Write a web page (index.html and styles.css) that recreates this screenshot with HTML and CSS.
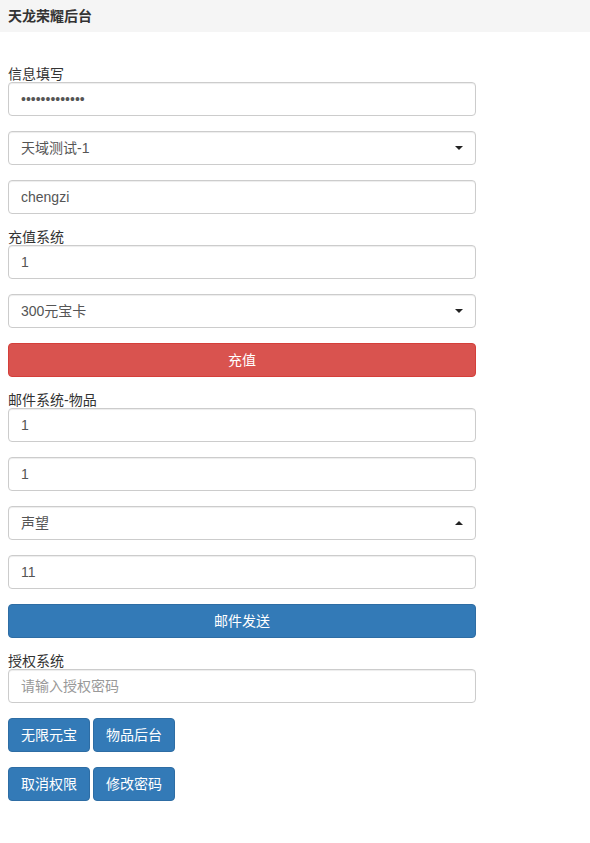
FILE: index.html
```html
<!DOCTYPE html>
<html lang="zh-CN">
<head>
<meta charset="utf-8">
<title>天龙荣耀后台</title>
<link rel="stylesheet" href="styles.css">
</head>
<body>
<header class="topbar">
  <h1 class="brand">天龙荣耀后台</h1>
</header>
<main class="panel">
  <section class="section">
    <label class="section-label">信息填写</label>
    <div class="form-group"><input class="form-control" type="password" value="1234567890123"></div>
    <div class="form-group select-wrap">
      <select class="form-control"><option>天域测试-1</option></select>
    </div>
    <div class="form-group"><input class="form-control" type="text" value="chengzi"></div>
  </section>

  <section class="section">
    <label class="section-label">充值系统</label>
    <div class="form-group"><input class="form-control" type="text" value="1"></div>
    <div class="form-group select-wrap">
      <select class="form-control"><option>300元宝卡</option></select>
    </div>
    <div class="form-group"><button class="btn btn-danger btn-block" type="button">充值</button></div>
  </section>

  <section class="section">
    <label class="section-label">邮件系统-物品</label>
    <div class="form-group"><input class="form-control" type="text" value="1"></div>
    <div class="form-group"><input class="form-control" type="text" value="1"></div>
    <div class="form-group select-wrap is-open">
      <select class="form-control"><option>声望</option></select>
    </div>
    <div class="form-group"><input class="form-control" type="text" value="11"></div>
    <div class="form-group"><button class="btn btn-primary btn-block" type="button">邮件发送</button></div>
  </section>

  <section class="section">
    <label class="section-label">授权系统</label>
    <div class="form-group"><input class="form-control" type="text" placeholder="请输入授权密码"></div>
    <div class="form-group btn-row">
      <button class="btn btn-primary" type="button">无限元宝</button>
      <button class="btn btn-primary" type="button">物品后台</button>
    </div>
    <div class="form-group btn-row">
      <button class="btn btn-primary" type="button">取消权限</button>
      <button class="btn btn-primary" type="button">修改密码</button>
    </div>
  </section>
</main>
</body>
</html>
```

FILE: styles.css
```css
* {
  box-sizing: border-box;
}

html, body {
  margin: 0;
  padding: 0;
  background: #fff;
}

body {
  font-family: "Liberation Sans", Arial, "Noto Sans CJK SC", sans-serif;
  font-size: 14px;
  line-height: 20px;
  color: #333;
}

.topbar {
  height: 32px;
  background: #f5f5f5;
  padding: 0 8px;
  display: flex;
  align-items: center;
}

.brand {
  margin: 0;
  font-size: 14px;
  font-weight: bold;
  line-height: 20px;
  color: #333;
}

.panel {
  width: 484px;
  padding: 34px 8px 20px;
}

.section-label {
  display: block;
  font-size: 14px;
  line-height: 16px;
  height: 16px;
  color: #333;
}

.form-group {
  margin-bottom: 15px;
}

.form-control {
  display: block;
  width: 100%;
  height: 34px;
  padding: 6px 12px;
  font-family: inherit;
  font-size: 14px;
  line-height: 20px;
  color: #555;
  background: #fff;
  border: 1px solid #ccc;
  border-radius: 4px;
  box-shadow: inset 0 1px 1px rgba(0, 0, 0, 0.075);
  outline: none;
}

.form-control::placeholder {
  color: #999;
}

select.form-control {
  -webkit-appearance: none;
  appearance: none;
  padding-right: 30px;
}

.select-wrap {
  position: relative;
}

.select-wrap::after {
  content: "";
  position: absolute;
  right: 13px;
  top: 15px;
  width: 0;
  height: 0;
  border-left: 4px solid transparent;
  border-right: 4px solid transparent;
  border-top: 4px solid #222;
  pointer-events: none;
}

.select-wrap.is-open::after {
  border-top: 0;
  border-bottom: 4px solid #222;
}

.btn {
  display: inline-block;
  height: 34px;
  padding: 6px 12px;
  font-family: inherit;
  font-size: 14px;
  line-height: 20px;
  color: #fff;
  text-align: center;
  border: 1px solid transparent;
  border-radius: 4px;
  cursor: pointer;
}

.btn-block {
  display: block;
  width: 100%;
}

.btn-danger {
  background: #d9534f;
  border-color: #d43f3a;
}

.btn-primary {
  background: #337ab7;
  border-color: #2e6da4;
}

.btn-row {
  display: flex;
  gap: 3px;
}
```
